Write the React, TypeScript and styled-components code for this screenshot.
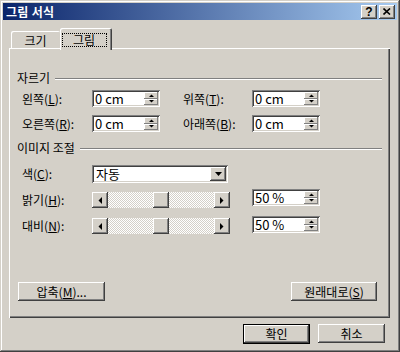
import React from 'react';
import styled, { createGlobalStyle } from 'styled-components';

const FACE = '#d4d0c8';
const SHADOW = '#808080';
const DARK = '#404040';
const FONT = '"Noto Sans CJK KR", "Noto Sans", sans-serif';

const raised = `
  background: ${FACE};
  box-shadow: inset -1px -1px ${DARK}, inset 1px 1px #fff, inset -2px -2px ${SHADOW}, inset 2px 2px ${FACE};
`;

const sunken = `
  background: #fff;
  box-shadow: inset 1px 1px ${SHADOW}, inset -1px -1px #fff, inset 2px 2px ${DARK}, inset -2px -2px ${FACE};
`;

const GlobalStyle = createGlobalStyle`
  html, body { margin: 0; padding: 0; background: ${FACE}; }
  body { font-family: ${FONT}; font-size: 12px; color: #000; }
  * { box-sizing: border-box; }
`;

const Window = styled.div`
  width: 400px;
  height: 352px;
  padding: 3px;
  display: flex;
  flex-direction: column;
  background: ${FACE};
  box-shadow: inset -1px -1px ${DARK}, inset 1px 1px ${FACE}, inset -2px -2px ${SHADOW}, inset 2px 2px #fff;
`;

const TitleBar = styled.div`
  height: 17px;
  display: flex;
  align-items: center;
  padding: 0 2px 0 3px;
  background: linear-gradient(to right, #0a246a, #a6caf0);
`;

const Title = styled.span`
  flex: 1;
  color: #fff;
  font-weight: bold;
  font-size: 12px;
  line-height: 17px;
  letter-spacing: 0.3px;
`;

const CaptionButtons = styled.div`
  display: flex;
  gap: 2px;
`;

const CaptionButton = styled.div`
  ${raised}
  width: 16px;
  height: 14px;
  display: flex;
  align-items: center;
  justify-content: center;
  font-family: "Liberation Sans", sans-serif;
  font-weight: bold;
  font-size: 12px;
  line-height: 14px;
`;

const Body = styled.div`
  flex: 1;
  display: flex;
  flex-direction: column;
  padding: 8px 7px 0 6px;
`;

const TabStrip = styled.div`
  display: flex;
  align-items: flex-end;
  height: 20px;
  padding-left: 2px;
`;

const Tab = styled.div<{ $active?: boolean }>`
  position: relative;
  z-index: ${p => (p.$active ? 1 : 0)};
  width: ${p => (p.$active ? 52 : 49)}px;
  height: ${p => (p.$active ? 22 : 17)}px;
  margin-bottom: ${p => (p.$active ? -2 : 0)}px;
  background: ${FACE};
  border-radius: 2px 2px 0 0;
  box-shadow: ${p =>
    p.$active
      ? `inset 1px 1px #fff, inset -1px 0 ${DARK}, inset -2px 0 ${SHADOW}`
      : `inset 1px 1px #fff`};
  display: flex;
  justify-content: center;
  padding-top: ${p => (p.$active ? 5 : 3)}px;
`;

const TabLabel = styled.span<{ $focused?: boolean }>`
  display: block;
  width: ${p => (p.$focused ? '45px' : 'auto')};
  height: 14px;
  line-height: 12px;
  text-align: center;
  border: 1px dotted ${p => (p.$focused ? '#000' : 'transparent')};
  margin-left: ${p => (p.$focused ? -4 : 0)}px;
`;

const Panel = styled.div`
  height: 270px;
  display: flex;
  flex-direction: column;
  padding: 23px 8px 17px 8px;
  box-shadow: inset 1px 1px #fff, inset -1px -1px ${DARK}, inset -2px -2px ${SHADOW};
`;

const GroupHeader = styled.div<{ $gap: number }>`
  display: flex;
  align-items: center;
  height: 14px;
  margin-top: ${p => p.$gap}px;
  line-height: 14px;
`;

const Rule = styled.div`
  flex: 1;
  height: 2px;
  margin-left: 5px;
  margin-top: 2px;
  border-top: 1px solid ${SHADOW};
  border-bottom: 1px solid #fff;
`;

const CropGrid = styled.div`
  display: grid;
  grid-template-columns: 70px 68px 23px 69px 68px;
  grid-auto-rows: 17px;
  row-gap: 8px;
  align-items: center;
  margin-top: 5px;
  padding-left: 5px;
`;

const FieldLabel = styled.span`
  line-height: 14px;
  white-space: nowrap;
`;

const U = styled.span`
  text-decoration: underline;
  text-underline-offset: 1px;
`;

const Edit = styled.div`
  ${sunken}
  width: 68px;
  height: 17px;
  padding: 2px;
  display: flex;
`;

const EditText = styled.span`
  flex: 1;
  padding-left: 1px;
  font-size: 13px;
  line-height: 13px;
`;

const SpinColumn = styled.div`
  width: 14px;
  display: flex;
  flex-direction: column;
`;

const SpinButton = styled.div`
  flex: 1;
  display: flex;
  align-items: center;
  justify-content: center;
  background: ${FACE};
  box-shadow: inset -1px -1px ${SHADOW}, inset 1px 1px #fff;
`;

const Row = styled.div<{ $gap: number }>`
  display: flex;
  align-items: flex-start;
  margin-top: ${p => p.$gap}px;
  padding-left: 5px;
`;

const RowLabel = styled(FieldLabel)<{ $drop?: number }>`
  width: 70px;
  margin-top: ${p => p.$drop ?? 2}px;
`;

const Combo = styled.div`
  ${sunken}
  width: 136px;
  height: 18px;
  padding: 2px;
  display: flex;
`;

const ComboText = styled.span`
  flex: 1;
  padding-left: 2px;
  font-size: 13px;
  line-height: 14px;
`;

const DropButton = styled.div`
  ${raised}
  width: 16px;
  display: flex;
  align-items: center;
  justify-content: center;
`;

const ScrollBar = styled.div<{ $drop: number }>`
  width: 138px;
  height: 16px;
  margin-top: ${p => p.$drop}px;
  margin-right: 22px;
  display: flex;
`;

const ScrollButton = styled.div`
  ${raised}
  width: 16px;
  height: 16px;
  display: flex;
  align-items: center;
  justify-content: center;
`;

const Track = styled.div`
  flex: 1;
  display: flex;
  background: repeating-conic-gradient(#fff 0 25%, ${FACE} 0 50%) 0 0 / 2px 2px;
`;

const Thumb = styled.div<{ $value: number }>`
  ${raised}
  width: 16px;
  height: 16px;
  margin-left: calc((100% - 16px) * ${p => p.$value});
`;

const ActionRow = styled.div`
  margin-top: auto;
  display: flex;
  justify-content: space-between;
  padding: 0 5px 0 1px;
`;

const PushButton = styled.div<{ $width: number; $default?: boolean }>`
  width: ${p => p.$width}px;
  height: ${p => (p.$default ? 20 : 19)}px;
  display: flex;
  align-items: center;
  justify-content: center;
  line-height: 14px;
  background: ${FACE};
  border: ${p => (p.$default ? '1px solid #000' : 'none')};
  box-shadow: inset -1px -1px ${DARK}, inset 1px 1px #fff, inset -2px -2px ${SHADOW};
`;

const Footer = styled.div`
  display: flex;
  justify-content: flex-end;
  gap: 8px;
  margin-top: 6px;
  padding-right: 5px;
`;

const Arrow = ({ dir }: { dir: 'up' | 'down' | 'left' | 'right' }) => {
  const pts = {
    up: '0,3 5,3 2.5,0.5',
    down: '0,0 5,0 2.5,2.5',
    left: '4,0 4,7 0.5,3.5',
    right: '0,0 0,7 3.5,3.5',
  }[dir];
  const w = dir === 'up' || dir === 'down' ? 5 : 4;
  const h = dir === 'up' || dir === 'down' ? 3 : 7;
  return (
    <svg width={w} height={h} viewBox={`0 0 ${w} ${h}`}>
      <polygon points={pts} fill="#000" />
    </svg>
  );
};

const Spin = ({ value }: { value: string }) => (
  <Edit>
    <EditText>{value}</EditText>
    <SpinColumn>
      <SpinButton><Arrow dir="up" /></SpinButton>
      <SpinButton><Arrow dir="down" /></SpinButton>
    </SpinColumn>
  </Edit>
);

const Slider = ({ value, drop }: { value: number; drop: number }) => (
  <ScrollBar $drop={drop}>
    <ScrollButton><Arrow dir="left" /></ScrollButton>
    <Track><Thumb $value={value} /></Track>
    <ScrollButton><Arrow dir="right" /></ScrollButton>
  </ScrollBar>
);

export default function App() {
  return (
    <>
      <GlobalStyle />
      <Window>
        <TitleBar>
          <Title>그림 서식</Title>
          <CaptionButtons>
            <CaptionButton>?</CaptionButton>
            <CaptionButton>
              <svg width="8" height="7" viewBox="0 0 8 7">
                <path d="M0.5 0.5 L7 6.5 M7 0.5 L0.5 6.5" stroke="#000" strokeWidth="1.6" />
              </svg>
            </CaptionButton>
          </CaptionButtons>
        </TitleBar>
        <Body>
          <TabStrip>
            <Tab><TabLabel>크기</TabLabel></Tab>
            <Tab $active><TabLabel $focused>그림</TabLabel></Tab>
          </TabStrip>
          <Panel>
            <GroupHeader $gap={0}>
              자르기
              <Rule />
            </GroupHeader>
            <CropGrid>
              <FieldLabel>왼쪽(<U>L</U>):</FieldLabel>
              <Spin value="0 cm" />
              <span />
              <FieldLabel>위쪽(<U>T</U>):</FieldLabel>
              <Spin value="0 cm" />
              <FieldLabel>오른쪽(<U>R</U>):</FieldLabel>
              <Spin value="0 cm" />
              <span />
              <FieldLabel>아래쪽(<U>B</U>):</FieldLabel>
              <Spin value="0 cm" />
            </CropGrid>
            <GroupHeader $gap={9}>
              이미지 조절
              <Rule />
            </GroupHeader>
            <Row $gap={10}>
              <RowLabel>색(<U>C</U>):</RowLabel>
              <Combo>
                <ComboText>자동</ComboText>
                <DropButton>
                  <svg width="7" height="4" viewBox="0 0 7 4">
                    <polygon points="0,0 7,0 3.5,4" fill="#000" />
                  </svg>
                </DropButton>
              </Combo>
            </Row>
            <Row $gap={6}>
              <RowLabel $drop={4}>밝기(<U>H</U>):</RowLabel>
              <Slider value={0.5} drop={3} />
              <Spin value="50 %" />
            </Row>
            <Row $gap={8}>
              <RowLabel $drop={3}>대비(<U>N</U>):</RowLabel>
              <Slider value={0.5} drop={2} />
              <Spin value="50 %" />
            </Row>
            <ActionRow>
              <PushButton $width={87}>압축(<U>M</U>)...</PushButton>
              <PushButton $width={86}>원래대로(<U>S</U>)</PushButton>
            </ActionRow>
          </Panel>
          <Footer>
            <PushButton $width={67} $default>확인</PushButton>
            <PushButton $width={67}>취소</PushButton>
          </Footer>
        </Body>
      </Window>
    </>
  );
}
